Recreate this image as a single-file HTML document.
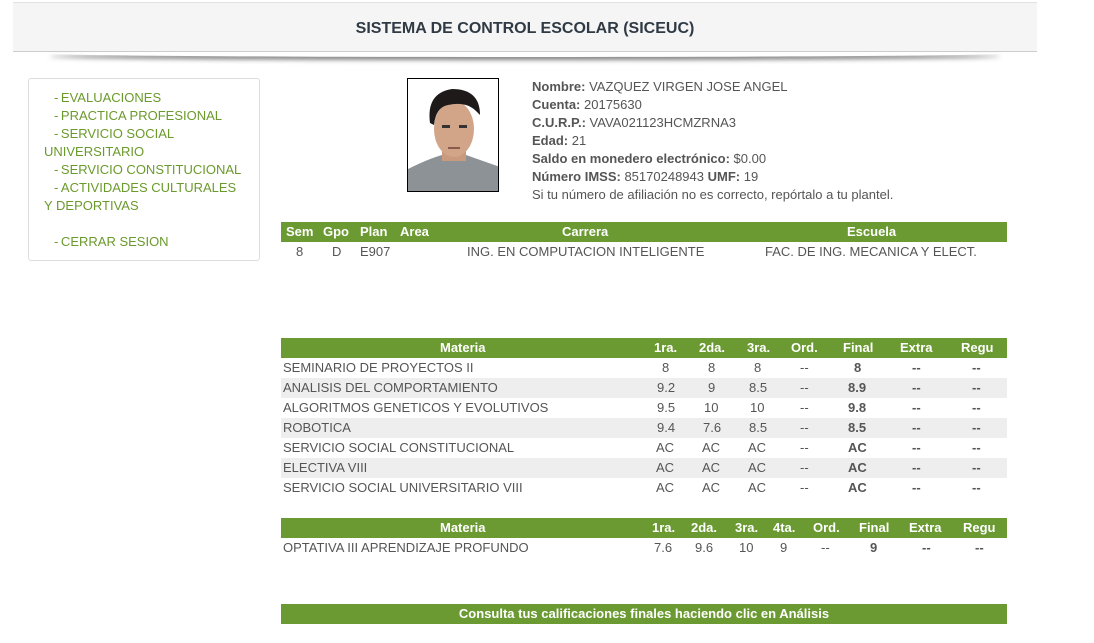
<!DOCTYPE html>
<html><head><meta charset="utf-8"><style>
*{margin:0;padding:0;box-sizing:border-box}
body{width:1094px;height:643px;background:#fff;font-family:"Liberation Sans",sans-serif;font-size:13px;color:#555;position:relative;overflow:hidden}
.hdr{position:absolute;left:13px;top:2px;width:1024px;height:50px;background:#f5f5f5;border-top:1px solid #e2e2e2;border-bottom:1px solid #ccc;text-align:center;line-height:52px;font-weight:bold;font-size:16px;color:#2f3a44}
.shadow{position:absolute;left:50px;top:50px;width:950px;height:7px;border-radius:50%;box-shadow:0 3px 5px rgba(0,0,0,.5)}
.side{position:absolute;left:28px;top:78px;width:232px;height:183px;border:1px solid #ddd;border-radius:3px;padding:10px 0 0 15px;line-height:18px;color:#6b9a2c}
.side div{padding-left:10px}
.side .w{padding-left:0}
.photo{position:absolute;left:407px;top:78px;width:92px;height:114px;border:1px solid #000;background:#fff;overflow:hidden}
.info{position:absolute;left:532px;top:78px;line-height:18px}
.info b{color:#555}
.t{position:absolute;left:281px;width:726px}
.gh{background:#6a9a31;color:#fff;font-weight:bold;height:20px;position:relative}
.r{height:20px;position:relative}
.r.g{background:#eee}
.c{position:absolute;top:0;line-height:20px;text-align:center;white-space:nowrap}
.gh .c{line-height:19px}
</style></head><body>
<div class="shadow"></div>
<div class="hdr">SISTEMA DE CONTROL ESCOLAR (SICEUC)</div>
<div class="side">
<div>-&thinsp;EVALUACIONES</div>
<div>-&thinsp;PRACTICA PROFESIONAL</div>
<div>-&thinsp;SERVICIO SOCIAL</div>
<div class="w">UNIVERSITARIO</div>
<div>-&thinsp;SERVICIO CONSTITUCIONAL</div>
<div>-&thinsp;ACTIVIDADES CULTURALES</div>
<div class="w">Y DEPORTIVAS</div>
<div>&nbsp;</div>
<div>-&thinsp;CERRAR SESION</div>
</div>
<div class="photo"><svg width="92" height="114" viewBox="0 0 92 114">
<path d="M0 114 L0 90 Q20 80 34 76 L58 76 Q75 82 92 88 L92 114Z" fill="#8c9296"/>
<rect x="34" y="62" width="24" height="20" fill="#c99a7e"/>
<ellipse cx="46" cy="50" rx="20" ry="28" fill="#d2a488"/>
<path d="M22 44 Q18 14 44 10 Q72 10 72 36 L68 32 Q58 22 40 26 Q28 28 26 46Z" fill="#1e1a1a"/>
<rect x="34" y="46" width="8" height="3" fill="#333"/><rect x="51" y="46" width="8" height="3" fill="#333"/>
<rect x="40" y="68" width="12" height="2" fill="#8a5a4a"/>
</svg></div>
<div class="info">
<div><b>Nombre:</b> VAZQUEZ VIRGEN JOSE ANGEL</div>
<div><b>Cuenta:</b> 20175630</div>
<div><b>C.U.R.P.:</b> VAVA021123HCMZRNA3</div>
<div><b>Edad:</b> 21</div>
<div><b>Saldo en monedero electrónico:</b> $0.00</div>
<div><b>Número IMSS:</b> 85170248943 <b>UMF:</b> 19</div>
<div>Si tu número de afiliación no es correcto, repórtalo a tu plantel.</div>
</div>

<div class="t" style="top:222px">
<div class="gh"><span class="c" style="left:5px">Sem</span><span class="c" style="left:42px">Gpo</span><span class="c" style="left:79px">Plan</span><span class="c" style="left:119px">Area</span><span class="c" style="left:281px">Carrera</span><span class="c" style="left:566px">Escuela</span></div>
<div class="r"><span class="c" style="left:15px">8</span><span class="c" style="left:51px">D</span><span class="c" style="left:79px">E907</span><span class="c" style="left:186px">ING. EN COMPUTACION INTELIGENTE</span><span class="c" style="left:484px">FAC. DE ING. MECANICA Y ELECT.</span></div>
</div>

<div class="t" style="top:338px">
<div class="gh"><span class="c" style="left:159px">Materia</span><span class="c" style="left:373px">1ra.</span><span class="c" style="left:418px">2da.</span><span class="c" style="left:466px">3ra.</span><span class="c" style="left:510px">Ord.</span><span class="c" style="left:562px">Final</span><span class="c" style="left:619px">Extra</span><span class="c" style="left:680px">Regu</span></div>
<div class="r"><span class="c" style="left:2px">SEMINARIO DE PROYECTOS II</span><span class="c" style="left:381px">8</span><span class="c" style="left:427px">8</span><span class="c" style="left:473px">8</span><span class="c" style="left:519px">--</span><span class="c" style="left:573px;font-weight:bold">8</span><span class="c" style="left:631px;font-weight:bold">--</span><span class="c" style="left:691px;font-weight:bold">--</span></div>
<div class="r g"><span class="c" style="left:2px">ANALISIS DEL COMPORTAMIENTO</span><span class="c" style="left:376px">9.2</span><span class="c" style="left:427px">9</span><span class="c" style="left:468px">8.5</span><span class="c" style="left:519px">--</span><span class="c" style="left:567px;font-weight:bold">8.9</span><span class="c" style="left:631px;font-weight:bold">--</span><span class="c" style="left:691px;font-weight:bold">--</span></div>
<div class="r"><span class="c" style="left:2px">ALGORITMOS GENETICOS Y EVOLUTIVOS</span><span class="c" style="left:376px">9.5</span><span class="c" style="left:423px">10</span><span class="c" style="left:469px">10</span><span class="c" style="left:519px">--</span><span class="c" style="left:567px;font-weight:bold">9.8</span><span class="c" style="left:631px;font-weight:bold">--</span><span class="c" style="left:691px;font-weight:bold">--</span></div>
<div class="r g"><span class="c" style="left:2px">ROBOTICA</span><span class="c" style="left:376px">9.4</span><span class="c" style="left:422px">7.6</span><span class="c" style="left:468px">8.5</span><span class="c" style="left:519px">--</span><span class="c" style="left:567px;font-weight:bold">8.5</span><span class="c" style="left:631px;font-weight:bold">--</span><span class="c" style="left:691px;font-weight:bold">--</span></div>
<div class="r"><span class="c" style="left:2px">SERVICIO SOCIAL CONSTITUCIONAL</span><span class="c" style="left:375px">AC</span><span class="c" style="left:421px">AC</span><span class="c" style="left:467px">AC</span><span class="c" style="left:519px">--</span><span class="c" style="left:567px;font-weight:bold">AC</span><span class="c" style="left:631px;font-weight:bold">--</span><span class="c" style="left:691px;font-weight:bold">--</span></div>
<div class="r g"><span class="c" style="left:2px">ELECTIVA VIII</span><span class="c" style="left:375px">AC</span><span class="c" style="left:421px">AC</span><span class="c" style="left:467px">AC</span><span class="c" style="left:519px">--</span><span class="c" style="left:567px;font-weight:bold">AC</span><span class="c" style="left:631px;font-weight:bold">--</span><span class="c" style="left:691px;font-weight:bold">--</span></div>
<div class="r"><span class="c" style="left:2px">SERVICIO SOCIAL UNIVERSITARIO VIII</span><span class="c" style="left:375px">AC</span><span class="c" style="left:421px">AC</span><span class="c" style="left:467px">AC</span><span class="c" style="left:519px">--</span><span class="c" style="left:567px;font-weight:bold">AC</span><span class="c" style="left:631px;font-weight:bold">--</span><span class="c" style="left:691px;font-weight:bold">--</span></div>
</div>

<div class="t" style="top:518px">
<div class="gh"><span class="c" style="left:159px">Materia</span><span class="c" style="left:371px">1ra.</span><span class="c" style="left:410px">2da.</span><span class="c" style="left:454px">3ra.</span><span class="c" style="left:492px">4ta.</span><span class="c" style="left:532px">Ord.</span><span class="c" style="left:578px">Final</span><span class="c" style="left:628px">Extra</span><span class="c" style="left:682px">Regu</span></div>
<div class="r"><span class="c" style="left:2px">OPTATIVA III APRENDIZAJE PROFUNDO</span><span class="c" style="left:373px">7.6</span><span class="c" style="left:414px">9.6</span><span class="c" style="left:458px">10</span><span class="c" style="left:499px">9</span><span class="c" style="left:540px">--</span><span class="c" style="left:589px;font-weight:bold">9</span><span class="c" style="left:641px;font-weight:bold">--</span><span class="c" style="left:694px;font-weight:bold">--</span></div>
</div>

<div class="t" style="top:604px"><div class="gh" style="text-align:center;line-height:19px">Consulta tus calificaciones finales haciendo clic en Análisis</div></div>
</body></html>
